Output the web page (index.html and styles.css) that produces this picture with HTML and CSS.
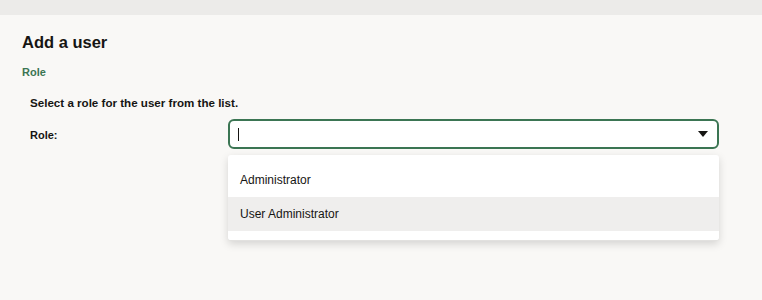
FILE: index.html
```html
<!DOCTYPE html>
<html lang="en">
<head>
  <meta charset="UTF-8" />
  <title>Add a user</title>
  <link rel="stylesheet" href="styles.css">
</head>
<body>
  <div class="topband"></div>
  <div class="page">
    <h1 class="title">Add a user</h1>
    <h2 class="section">Role</h2>
    <div class="form">
      <p class="hint">Select a role for the user from the list.</p>
      <div class="row">
        <div class="label">Role:</div>
        <div class="combo">
          <div class="field">
            <span class="cursor"></span>
            <svg class="arrow" width="10" height="6" viewBox="0 0 10 6"><path d="M0 0h10L5 6z" fill="#161513"/></svg>
          </div>
          <div class="menu">
            <div class="option">Administrator</div>
            <div class="option active">User Administrator</div>
          </div>
        </div>
      </div>
    </div>
  </div>
</body>
</html>
```

FILE: styles.css
```css
html, body {
  min-height: 300px;
}
body {
  margin: 0;
  background: #f9f8f6;
  font-family: "Liberation Sans", Arial, sans-serif;
  color: #161513;
}
.topband {
  height: 15px;
  background: #ecebe9;
}
.page {
  padding: 17px 22px 50px;
}
.title {
  margin: 0;
  font-size: 16.5px;
  font-weight: bold;
  line-height: 20px;
}
.section {
  margin: 12px 0 0;
  font-size: 11px;
  font-weight: bold;
  color: #3b7553;
  line-height: 16px;
}
.form {
  padding-left: 8px;
}
.hint {
  margin: 16px 0 0;
  font-size: 11.6px;
  font-weight: bold;
  line-height: 14px;
}
.row {
  display: flex;
  margin-top: 9px;
}
.label {
  width: 198px;
  font-size: 11px;
  font-weight: bold;
  padding-top: 10px;
}
.combo {
  width: 491px;
  display: flex;
  flex-direction: column;
}
.field {
  height: 26px;
  border: 2px solid #3b7553;
  border-radius: 6px;
  background: #fff;
  display: flex;
  align-items: center;
  justify-content: space-between;
  padding: 0 9px 0 8px;
}
.cursor {
  width: 1px;
  height: 13px;
  background: #161513;
}
.menu {
  margin-top: 6px;
  padding: 8px 0 9px;
  background: #fff;
  border-radius: 3px;
  border-bottom: 1px solid #e2e1df;
  box-shadow: 0 3px 8px rgba(0,0,0,0.15);
}
.option {
  height: 34px;
  line-height: 34px;
  padding-left: 12px;
  font-size: 12px;
}
.option.active {
  background: #efeeed;
}
```
